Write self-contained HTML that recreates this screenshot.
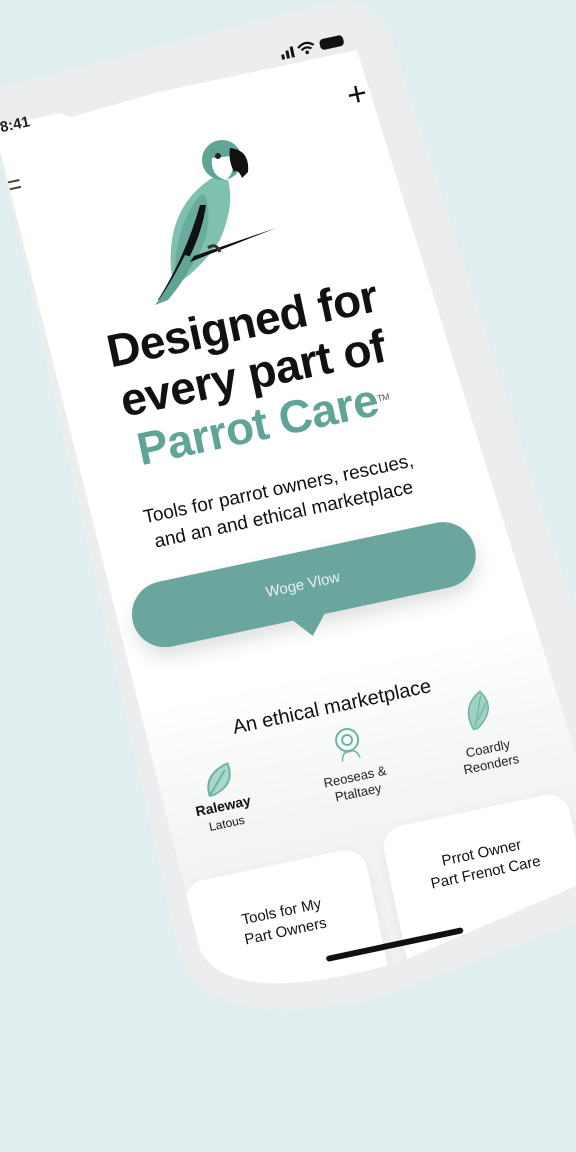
<!DOCTYPE html>
<html><head><meta charset="utf-8"><style>
html,body{margin:0;padding:0}
body{width:576px;height:1152px;background:#e2eff0;position:relative;overflow:hidden;font-family:"Liberation Sans",sans-serif}
#frame{position:absolute;left:0;top:0}
#scr{position:absolute;left:0;top:0;width:576px;height:1152px;
clip-path:path('M -10 100 L 45 93 Q 55 92 58 105 Q 62 120 75 116 L 235 70 Q 248 66 250 52 Q 252 38 265 34 L 315 22 Q 345 15 357 50 L 590 800 L 590 880 L 400 962 Q 230 1010 200 950 L -10 110 Z')}
#c{position:absolute;left:0;top:0;width:450px;height:960px;transform-origin:0 0;
transform:matrix(0.978,-0.208,0.208,0.978,-10,128);
background:linear-gradient(#fff 0,#fff 600px,#f3f4f5 740px,#eef0f1 960px)}
.a{position:absolute}
.ct{transform:translate(-50%,-50%);text-align:center;white-space:nowrap}
h1{margin:0;font-size:46px;line-height:51px;font-weight:bold;color:#111;letter-spacing:-0.5px}
.card{position:absolute;background:#fff;border-radius:22px;box-shadow:0 4px 14px rgba(0,0,0,.06)}
</style></head><body>
<svg id="frame" width="576" height="1152">
<path d="M -10 90 L 320 4 Q 378 -12 395 48 L 600 690 L 600 915 L 576 923 L 383 997 Q 215 1035 180 960 L -10 110 Z" fill="#ecedee"/>
</svg>
<div id="scr">
<div id="c">
 <div class="a ct" style="left:25px;top:2px;font-size:15px;font-weight:bold;color:#222">8:41</div>
 <svg class="a" style="left:300px;top:-20px" width="70" height="16">
  <rect x="0" y="9" width="3" height="5" fill="#111"/><rect x="5" y="6" width="3" height="8" fill="#111"/><rect x="10" y="3" width="3" height="11" fill="#111"/>
  <path d="M18 6 Q26 -1 34 6 M21 9 Q26 5 31 9" stroke="#111" stroke-width="2.2" fill="none"/><circle cx="26" cy="12" r="1.8" fill="#111"/>
  <rect x="40" y="2" width="24" height="11" rx="4" fill="#111"/>
 </svg>
 <div class="a ct" style="left:366px;top:44px;font-size:34px;font-weight:300;color:#111">+</div>
 <div class="a" style="left:2px;top:56px;width:16px;height:2px;background:#444"></div>
 <div class="a" style="left:2px;top:63px;width:16px;height:2px;background:#444"></div>
 <div class="a ct" style="left:206px;top:295px"><h1>Designed for<br>every part of<br><span style="color:#5fa497">Parrot Care</span><sup style="font-size:9px;font-weight:normal;vertical-align:top;color:#555">TM</sup></h1></div>
 <div class="a ct" style="left:207px;top:427px;font-size:19px;line-height:26px;color:#111">Tools for parrot owners, rescues,<br>and an and ethical marketplace</div>
 <div class="a" style="left:37px;top:479px;width:350px;height:66px;border-radius:33px;background:#6aa69e;box-shadow:0 10px 18px rgba(0,0,0,.12)"></div>
 <div class="a" style="left:188px;top:538px;width:0;height:0;border-left:22px solid transparent;border-right:22px solid transparent;border-top:26px solid #6aa69e"></div>
 <div class="a ct" style="left:211px;top:512px;font-size:15px;color:#e6f2ef">Woge Vlow</div>
 <div class="a ct" style="left:214px;top:638px;font-size:20px;color:#111">An ethical marketplace</div>
 <svg class="a" style="left:70px;top:667px" width="36" height="36"><path d="M6 32 Q4 10 30 4 Q34 26 10 32 Z M6 32 L26 10" stroke="#6fb3a4" stroke-width="2" fill="#a8d8cc"/></svg>
 <div class="a ct" style="left:87px;top:721px;font-size:14px;line-height:17px;color:#111"><b>Raleway</b><br><span style="font-size:12px">Latous</span></div>
 <svg class="a" style="left:205px;top:659px" width="34" height="36"><circle cx="17" cy="14" r="11" stroke="#6fb3a4" stroke-width="2" fill="none"/><circle cx="17" cy="14" r="5" stroke="#6fb3a4" stroke-width="2" fill="none"/><path d="M8 34 Q10 24 17 26 Q24 24 26 34" stroke="#6fb3a4" stroke-width="1.5" fill="none"/></svg>
 <div class="a ct" style="left:222px;top:719px;font-size:13px;line-height:16px;color:#222">Reoseas &amp;<br>Ptaltaey</div>
 <svg class="a" style="left:338px;top:651px" width="38" height="40"><path d="M10 38 Q2 14 24 2 Q38 22 14 38 Z" fill="#9fd2c4" stroke="#6fb3a4" stroke-width="1.5"/><path d="M12 36 L24 6 M16 30 L28 14" stroke="#6fb3a4" stroke-width="1.2"/></svg>
 <div class="a ct" style="left:358px;top:719px;font-size:13px;line-height:16px;color:#222">Coardly<br>Reonders</div>
 <div class="card" style="left:29px;top:780px;width:186px;height:170px"></div>
 <div class="card" style="left:235px;top:768px;width:190px;height:180px"></div>
 <div class="a ct" style="left:122px;top:838px;font-size:15px;line-height:20px;color:#111">Tools for My<br>Part Owners</div>
 <div class="a ct" style="left:330px;top:822px;font-size:15px;line-height:20px;color:#111">Prrot Owner<br>Part Frenot Care</div>
 <div class="a" style="left:156px;top:880px;width:140px;height:6px;border-radius:3px;background:#111"></div>
</div>
<svg class="a" style="left:0;top:0" width="576" height="400">
 <path d="M212 178 Q178 200 172 240 Q168 270 175 285 Q200 270 220 240 Q235 205 228 180 Z" fill="#7fc1b1"/>
 <path d="M200 195 Q180 220 176 255 Q174 280 168 292 Q195 268 205 240 Q212 215 205 195 Z" fill="#6aac9e"/>
 <path d="M206 205 Q200 250 162 302 L158 300 Q186 255 200 205 Z" fill="#111"/>
 <path d="M185 255 Q170 285 155 305 L168 300 Q185 280 195 258 Z" fill="#5ea596"/>
 <circle cx="222" cy="160" r="20" fill="#5ea596"/>
 <path d="M212 158 Q210 176 226 180 Q236 172 232 156 Z" fill="#fff"/>
 <path d="M230 148 Q250 150 248 172 L242 178 Q238 168 234 172 Q228 160 230 148 Z" fill="#111"/>
 <circle cx="218" cy="156" r="3" fill="#222"/>
 <path d="M190 262 L276 228 L194 256 Z" fill="#111"/>
 <path d="M208 248 Q216 242 220 252" stroke="#333" stroke-width="3" fill="none"/>
</svg>
</div>
</body></html>
